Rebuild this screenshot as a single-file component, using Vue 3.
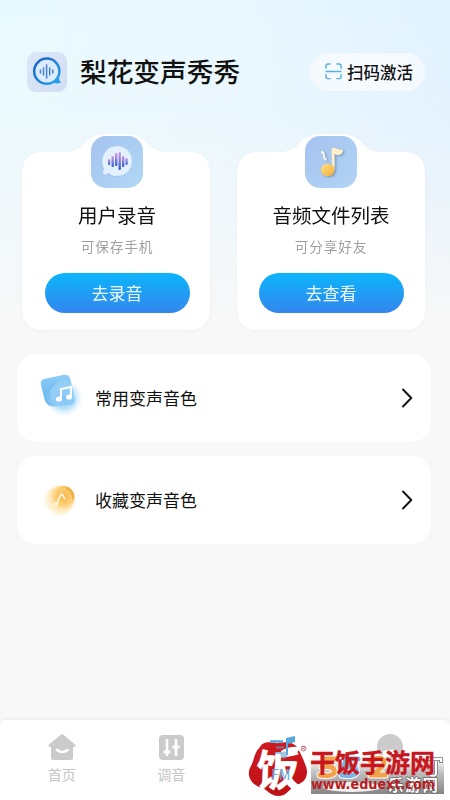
<script setup>
const cards = [
  { id: 'record', title: '用户录音', note: '可保存手机', action: '去录音' },
  { id: 'files', title: '音频文件列表', note: '可分享好友', action: '去查看' },
]
const rows = [
  { id: 'common', title: '常用变声音色' },
  { id: 'favorite', title: '收藏变声音色' },
]
</script>

<template>
  <div class="page">
    <header class="header">
      <svg class="logo" viewBox="0 0 40 40">
        <defs>
          <linearGradient id="logoBg" x1="0" y1="0" x2="1" y2="1">
            <stop offset="0" stop-color="#dbe8f9" /><stop offset="1" stop-color="#d3dcf4" />
          </linearGradient>
          <linearGradient id="logoRing" x1="0" y1="0" x2="1" y2="1">
            <stop offset="0" stop-color="#1d5fc4" /><stop offset="1" stop-color="#25a5ee" />
          </linearGradient>
        </defs>
        <rect width="40" height="40" rx="9" fill="url(#logoBg)" />
        <circle cx="19.8" cy="19.2" r="12.6" fill="#dcecff" stroke="url(#logoRing)" stroke-width="2.500" />
        <path d="M25 30 Q30 27 31.500 22 Q31.500 28 34 30.500 Q30 32.500 25 30Z" fill="#279fe8" />
        <path d="M13.400 18v3M16.500 16v7M19.600 13v13M22.700 16v7M25.800 18v3" stroke="#4a80ca" stroke-width="1.500" stroke-linecap="round" />
      </svg>
      <h1 class="title">梨花变声秀秀</h1>
      <button class="scan">
        <svg class="scan-icon" viewBox="0 0 18 18" fill="none" stroke="#58aee0" stroke-width="1.500">
          <path d="M1 6V3Q1 1 3 1H6M12 1H15Q17 1 17 3V6M1 12V14Q1 16.500 3 16.500H6M12 16.500H15Q17 16.500 17 14V12M0.500 9H17.500" />
        </svg>
        <span>扫码激活</span>
      </button>
    </header>

    <main class="content">
      <section class="cards">
        <article v-for="card in cards" :key="card.id" class="card" :class="card.id">
          <svg class="card-shape" viewBox="0 0 188 198">
            <path d="M22 20H43C60 20 61 9 71 5Q76 2 84 2H104Q112 2 117 5C127 9 128 20 145 20H166Q188 20 188 42V176Q188 198 166 198H22Q0 198 0 176V42Q0 20 22 20Z" fill="#fff" />
          </svg>
          <svg v-if="card.id === 'record'" class="card-icon" viewBox="0 0 52 52">
            <defs>
              <linearGradient id="recordBg" x1="0" y1="0" x2="1" y2="1">
                <stop offset="0" stop-color="#a5c3f0" /><stop offset="1" stop-color="#b1d8f5" />
              </linearGradient>
              <linearGradient id="wave" x1="0" y1="0" x2="0" y2="1">
                <stop offset="0" stop-color="#d69ce8" /><stop offset="1" stop-color="#315fd2" />
              </linearGradient>
            </defs>
            <rect width="52" height="52" rx="15" fill="url(#recordBg)" />
            <path d="M13 40Q10 39 12 35C8 22 15 10 26 10C35 10 41 17 41 25C41 34 34 41 25 41Q21 41 18 39Q15 41 13 40Z" fill="#93b7e7" opacity=".35" />
            <path d="M13 38.500Q11 38 13 33C8 22 15 10 26 10C35 10 41 17 41 25C41 34 34 40 25 40Q20 40 18 37Q16 39 13 38.500Z" fill="#e2f0ff" />
            <g fill="url(#wave)">
              <rect x="17" y="23" width="2.200" height="6" rx="1" /><rect x="20.500" y="20" width="2.400" height="11" rx="1" />
              <rect x="24" y="17" width="2.400" height="13" rx="1" /><rect x="27.500" y="16" width="2.400" height="18" rx="1" />
              <rect x="31" y="20" width="2.400" height="11" rx="1" /><rect x="34.500" y="22" width="2.200" height="7" rx="1" />
            </g>
          </svg>
          <svg v-else class="card-icon" viewBox="0 0 52 52">
            <defs>
              <linearGradient id="filesBg" x1="0" y1="0" x2="1" y2="1">
                <stop offset="0" stop-color="#a4c3f0" /><stop offset="1" stop-color="#b2d4f5" />
              </linearGradient>
              <linearGradient id="gold" x1="0" y1="0" x2="1" y2="1">
                <stop offset="0" stop-color="#ffe185" /><stop offset="1" stop-color="#f3ad3c" />
              </linearGradient>
              <filter id="noteShadow"><feDropShadow dx="1.500" dy="1" stdDeviation="1" flood-color="#5d789a" flood-opacity=".65" /></filter>
            </defs>
            <rect width="52" height="52" rx="15" fill="url(#filesBg)" />
            <g filter="url(#noteShadow)">
              <path d="M26.500 13Q27 11 30 12Q35 14 38 14Q38 18 34 19Q31 19 29.500 18V34H27.300Z" fill="#fff0c9" />
              <ellipse cx="22.700" cy="34" rx="6.800" ry="6.200" fill="url(#gold)" />
              <path d="M16 16Q19 16 19 20Q19 23 21.500 24" stroke="#fff9e7" stroke-width="1.800" fill="none" />
            </g>
          </svg>
          <h2 class="card-title">{{ card.title }}</h2>
          <p class="card-note">{{ card.note }}</p>
          <button class="action">{{ card.action }}</button>
        </article>
      </section>

      <section class="rows">
        <div v-for="row in rows" :key="row.id" class="row">
          <svg v-if="row.id === 'common'" class="row-icon" viewBox="0 0 50 50">
            <defs>
              <linearGradient id="blueTile" x1="0" y1="0" x2="0" y2="1">
                <stop offset="0" stop-color="#8fcdf7" /><stop offset="1" stop-color="#5cb0ee" />
              </linearGradient>
              <radialGradient id="blueGlow">
                <stop offset="0" stop-color="#82c4f6" /><stop offset=".55" stop-color="#a0d5fa" stop-opacity=".75" /><stop offset="1" stop-color="#c9e9ff" stop-opacity="0" />
              </radialGradient>
            </defs>
            <path d="M7 6L26 2Q31 1 33 5L38 26Q39 31 34 32L18 33.500Q11 34 8 28L4 12Q3 7 7 6Z" fill="url(#blueTile)" />
            <path d="M18 11Q11 14 12 22L16 32" stroke="#57a9e8" stroke-width="2" fill="none" opacity=".5" />
            <circle cx="27" cy="25" r="19" fill="url(#blueGlow)" />
            <path d="M24 26V16L34 14V24" stroke="#fff" stroke-width="2" fill="none" />
            <ellipse cx="22" cy="26" rx="3" ry="2.600" fill="#fff" /><ellipse cx="32" cy="24" rx="3" ry="2.600" fill="#fff" />
          </svg>
          <svg v-else class="row-icon" viewBox="0 0 50 50">
            <defs>
              <radialGradient id="orangeGlow" cx=".65" cy=".35" r=".72">
                <stop offset="0" stop-color="#f5b64c" /><stop offset=".4" stop-color="#ffd37d" /><stop offset=".8" stop-color="#fff0cf" /><stop offset="1" stop-color="#fff8e9" />
              </radialGradient>
              <filter id="soften"><feGaussianBlur stdDeviation=".8" /></filter>
            </defs>
            <circle cx="26.500" cy="22" r="11" fill="#efb344" />
            <circle cx="22.500" cy="25.500" r="14.500" fill="url(#orangeGlow)" filter="url(#soften)" opacity=".88" />
            <path d="M29 13Q36 16 36 24" stroke="#e5a53b" stroke-width="2" fill="none" opacity=".6" />
            <path d="M20 29Q23 20 25 19L28 24" stroke="#fff6df" stroke-width="1.600" fill="none" /><circle cx="19" cy="29" r="2" fill="#fff5dc" />
          </svg>
          <span class="row-title">{{ row.title }}</span>
          <svg class="chevron" viewBox="0 0 12 20"><path d="M2 1.500L10.300 10L2 18.500" fill="none" stroke="#171717" stroke-width="2" stroke-linecap="round" stroke-linejoin="round" /></svg>
        </div>
      </section>
    </main>

    <nav class="nav">
      <div class="tab">
        <svg class="tab-icon" viewBox="0 0 28 28"><path d="M13 1.500Q14 0.700 15 1.500L27 11.500Q28.500 13.500 26 14H25V25Q25 27 23 27H5Q3 27 3 25V14H2Q-0.500 13.500 1 11.500Z" fill="#cbcbcb" /><path d="M9 17Q14 21 19.500 17" fill="none" stroke="#fff" stroke-width="2.600" stroke-linecap="round" /></svg>
        <span>首页</span>
      </div>
      <div class="tab">
        <svg class="tab-icon" viewBox="0 0 28 28"><rect x="2" y="2" width="25" height="25" rx="4" fill="#cbcbcb" /><path d="M10 6V23M19 6V23" stroke="#fff" stroke-width="2.600" /><path d="M6.500 19H13.500M15.500 14H22.500" stroke="#fff" stroke-width="3" /></svg>
        <span>调音</span>
      </div>
      <div class="tab active">
        <svg class="tab-icon" viewBox="0 0 28 28"><path d="M3 8.500H16" stroke="#54a9dc" stroke-width="2.500" /><path d="M9 14.500H17M8 20H15" stroke="#54a9dc" stroke-width="2" opacity=".65" /><path d="M19 5L28 3V9L21 11V22H19Z" fill="#54a9dc" /><circle cx="17" cy="22" r="3.500" fill="#71a9cf" opacity=".65" /></svg>
        <span>FM</span>
      </div>
      <div class="tab">
        <svg class="tab-icon" viewBox="0 0 28 28"><circle cx="14" cy="14" r="13" fill="#cbcbcb" /><path d="M7 18Q14 15 21 18V24H7Z" fill="#fff" /></svg>
      </div>
    </nav>

    <svg class="watermark" viewBox="0 0 210 70">
      <defs>
        <linearGradient id="badge" x1="0" y1="0" x2="0" y2="1"><stop offset="0" stop-color="#e8e8e8" stop-opacity=".2" /><stop offset=".4" stop-color="#c4c4c4" /><stop offset="1" stop-color="#858585" /></linearGradient>
        <linearGradient id="redSeal" x1="0" y1="0" x2="0" y2="1"><stop offset="0" stop-color="#cf1b20" /><stop offset="1" stop-color="#bd1017" /></linearGradient>
      </defs>
      <rect x="71" y="26" width="133" height="38" fill="url(#badge)" />
      <ellipse cx="112" cy="57" rx="29" ry="5" fill="#f2f2f2" />
      <g fill="none" stroke-linejoin="round" stroke-linecap="round">
        <path d="M96 29H84L82 37Q96 35 94 43Q92 47 80 45M118 29H106L104 37Q118 35 116 43Q114 47 102 45M130 31Q142 25 144 32Q145 37 131 45H145" stroke="#fff" stroke-width="7" />
        <path d="M96 29H84L82 37Q96 35 94 43Q92 47 80 45" stroke="#f2a24a" stroke-width="5" />
        <path d="M118 29H106L104 37Q118 35 116 43Q114 47 102 45" stroke="#78b4e4" stroke-width="5" />
        <path d="M130 31Q142 25 144 32Q145 37 131 45H145" stroke="#f2a24a" stroke-width="5" />
      </g>
      <path d="M188 29H201V33M196 31V44Q195 47 190 45" fill="none" stroke="#777" stroke-width="3.500" />
      <path d="M188 29H201V32M196 31V44Q195 47 190 45" fill="none" stroke="#fff" stroke-width="2" />
      <text x="148" y="61" class="cjk badge-text" font-size="15.500" font-weight="700" textLength="50">乐游网</text>
      <path d="M20 17C25 9 33 14 40 13C47 11 54 13 57 17C60 22 63 28 65 34C69 42 67 51 59 54C50 56 48 66 39 66C29 66 27 58 19 57C10 53 6 44 11 36C15 28 14 23 20 17Z" fill="url(#redSeal)" />
      <text class="cjk seal-word" transform="translate(16 55.500) skewX(-2)" font-size="43" font-weight="700">饭</text>
      <path d="M41 21Q49 16 59 17Q60 21 55 24L41 25ZM51 47Q57 56 66 58Q57 60 48 53Z" fill="#fff" />
      <circle cx="63.500" cy="18.500" r="2.400" fill="none" stroke="#b95b65" stroke-width=".8" />
      <text x="62" y="20.100" class="latin" font-size="4.500" fill="#a74e58">R</text>
      <text x="70" y="42" class="cjk" font-size="25" font-weight="700" textLength="125" lengthAdjust="spacingAndGlyphs" fill="#c7161d" stroke="#c7161d" stroke-width=".4">干饭手游网</text>
      <text x="71" y="59" class="url" font-size="13.500" font-weight="700" textLength="124" lengthAdjust="spacingAndGlyphs" fill="#b91d24">www.eduext.com</text>
    </svg>
  </div>
</template>

<style>
body { margin: 0; overflow: hidden; }
</style>

<style scoped>
* { box-sizing: border-box; }
.page {
  position: relative;
  display: flex;
  flex-direction: column;
  width: 450px;
  height: 800px;
  overflow: hidden;
  font-family: "Noto Sans CJK SC", sans-serif;
  color: #111;
  background: linear-gradient(180deg, rgba(248,248,248,0) 0, rgba(248,248,248,.12) 100px, #f8f8f8 320px), linear-gradient(100deg, #e9faff 0, #e9f8ff 40%, #e0f1ff 80%, #dfefff 100%);
}
h1, h2, p { margin: 0; }
button { border: 0; padding: 0; font-family: inherit; }
svg { display: block; flex: none; }
.header { display: flex; align-items: center; height: 39px; margin: 52px 25px 0 27px; }
.logo { width: 40px; height: 40px; }
.title { margin-left: 13px; padding-bottom: 2px; font-size: 26.7px; line-height: 37px; font-weight: 500; white-space: nowrap; }
.scan { display: flex; align-items: center; width: 115px; height: 38px; margin-left: auto; padding-left: 15px; gap: 5px; border-radius: 19px; background: #f5faff; color: #111; font-size: 16.5px; font-weight: 500; line-height: 36px; white-space: nowrap; }
.scan-icon { width: 17px; height: 17px; }
.cards { display: flex; gap: 27px; padding: 41px 25px 0 22px; }
.card { position: relative; display: flex; flex-direction: column; align-items: center; width: 188px; height: 198px; padding-top: 4px; filter: drop-shadow(0 1px 2px rgba(80,100,120,.04)); }
.record { padding-left: 2px; }
.card-shape { position: absolute; inset: 0; width: 188px; height: 198px; }
.card-icon, .card-title, .card-note, .action { position: relative; }
.card-icon { width: 52px; height: 52px; }
.card-title { margin-top: 14px; font-size: 19.5px; line-height: 26px; font-weight: 400; }
.card-note { margin-top: 8px; font-size: 13.7px; letter-spacing: .8px; line-height: 20px; color: #a0a0a0; }
.action { width: 145px; height: 40px; margin-top: 17px; border-radius: 20px; color: #effcff; font-size: 17px; line-height: 38px; background: linear-gradient(180deg, #0bb5fb, #3486ee); }
.rows { display: flex; flex-direction: column; gap: 14px; padding: 24px 19px 0 17px; }
.row { display: flex; align-items: center; height: 88px; padding: 0 18px 0 20px; border-radius: 20px; background: #fff; }
.row-icon { width: 50px; height: 50px; }
.row-title { margin-left: 8px; font-size: 17px; line-height: 24px; }
.chevron { width: 12px; height: 20px; margin-left: auto; }
.nav { display: flex; height: 80px; margin-top: auto; padding: 0 5px 0 7px; border-radius: 6px 6px 0 0; background: #fff; box-shadow: 0 -1px 4px rgba(0,0,0,.06); }
.tab { display: flex; flex: 1; flex-direction: column; align-items: center; padding-top: 13px; color: #c5c5c5; font-size: 14px; line-height: 20px; }
.tab-icon { width: 28px; height: 28px; margin-bottom: 3px; }
.active { position: relative; z-index: 2; color: #62abd5; }
.watermark { position: absolute; left: 240px; top: 730px; width: 210px; height: 70px; }
.cjk { font-family: "Noto Sans CJK SC", sans-serif; }
.latin { font-family: "Liberation Sans", sans-serif; }
.url { font-family: "DejaVu Sans", sans-serif; }
.seal-word { fill: #fff; stroke: #fff; stroke-width: .6px; }
.badge-text { fill: #fff; stroke: #666; stroke-width: 1.500px; paint-order: stroke; }
</style>
